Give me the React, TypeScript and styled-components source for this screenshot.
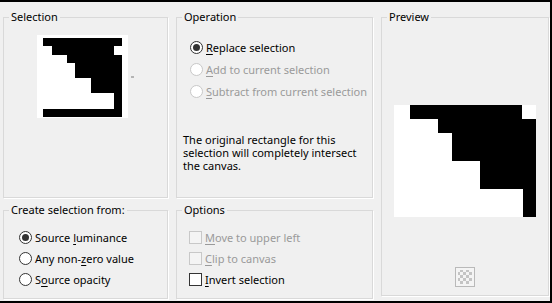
import React from "react";
import styled, { createGlobalStyle } from "styled-components";

const Global = createGlobalStyle`
  html, body { margin: 0; padding: 0; background: #f0f0f0; }
  body {
    font-family: "Noto Sans", "Open Sans", sans-serif;
    font-size: 11px;
    color: #000;
  }
`;

const Dialog = styled.div`
  box-sizing: border-box;
  width: 552px;
  height: 303px;
  background: #f0f0f0;
  border-top: 2px solid #000;
  border-right: 2px solid #000;
  border-bottom: 2px solid #000;
  padding: 8px 0 0 3px;
  display: grid;
  grid-template-columns: 165px 197px 168px;
  grid-template-rows: 188px 96px;
  column-gap: 8px;
  row-gap: 5px;
`;

const Group = styled.fieldset<{ $col: number; $row: string; $h?: number }>`
  box-sizing: border-box;
  margin: 0;
  min-width: 0;
  padding: 0;
  border: 1px solid #d9d9d9;
  box-shadow: 1px 1px 0 #fff;
  height: ${(p) => (p.$h ? `${p.$h}px` : "100%")};
  grid-column: ${(p) => p.$col};
  grid-row: ${(p) => p.$row};
`;

const Legend = styled.legend`
  margin-left: 5px;
  padding: 0 2px;
  line-height: 14px;
  font-size: 11px;
`;

const ThumbRow = styled.div`
  display: flex;
  align-items: center;
  justify-content: center;
  gap: 3px;
  padding-top: 11px;
`;

const DropMark = styled.span`
  width: 3px;
  height: 2px;
  background: #b4b4b4;
`;

const OptionList = styled.div<{ $top: number; $left: number }>`
  display: flex;
  flex-direction: column;
  padding: ${(p) => p.$top}px 0 0 ${(p) => p.$left}px;
`;

const OptionRow = styled.label<{ $disabled?: boolean; $h: number }>`
  display: flex;
  align-items: center;
  gap: 3px;
  height: ${(p) => p.$h}px;
  color: ${(p) => (p.$disabled ? "#9a9a9a" : "#000")};
  white-space: nowrap;
  line-height: 13px;
`;

const RadioMark = styled.span<{ $checked?: boolean; $disabled?: boolean }>`
  box-sizing: border-box;
  flex: none;
  width: 13px;
  height: 13px;
  border-radius: 50%;
  border: 1px solid ${(p) => (p.$disabled ? "#c8c8c8" : "#333")};
  background: #fff;
  display: flex;
  align-items: center;
  justify-content: center;
  &::after {
    content: "";
    width: 7px;
    height: 7px;
    border-radius: 50%;
    background: #333;
    display: ${(p) => (p.$checked ? "block" : "none")};
  }
`;

const CheckMark = styled.span<{ $disabled?: boolean }>`
  box-sizing: border-box;
  flex: none;
  width: 13px;
  height: 13px;
  border: 1px solid ${(p) => (p.$disabled ? "#c8c8c8" : "#333")};
  background: ${(p) => (p.$disabled ? "#f4f4f4" : "#fff")};
`;

const Key = styled.span`
  text-decoration: underline;
  text-underline-offset: 2px;
`;

const Note = styled.p`
  margin: 31px 0 0 6px;
  line-height: 13px;
  white-space: nowrap;
`;

const PreviewBody = styled.div`
  display: flex;
  flex-direction: column;
  align-items: center;
  padding-top: 81px;
`;

const CheckerButton = styled.div`
  box-sizing: border-box;
  width: 20px;
  height: 20px;
  margin-top: 50px;
  border: 1px solid #b9b9b9;
  padding: 2px;
  background: repeating-conic-gradient(#c4c4c4 0 25%, #f4f4f4 0 50%) 2px 2px / 6px 6px content-box,
    #f4f4f4;
`;

const Thumb = () => (
  <svg width="91" height="83" viewBox="0 0 91 83" style={{ display: "block" }}>
    <rect width="91" height="83" fill="#fff" />
    <g fill="#000">
      <rect x="6" y="3" width="79" height="8" />
      <rect x="15" y="11" width="62" height="9" />
      <rect x="30" y="20" width="55" height="8" />
      <rect x="38" y="28" width="47" height="15" />
      <rect x="54" y="43" width="31" height="15" />
      <rect x="77" y="58" width="8" height="16" />
      <rect x="6" y="74" width="79" height="8" />
    </g>
  </svg>
);

const PreviewImage = () => (
  <svg width="142" height="112" viewBox="0 0 142 112" style={{ display: "block" }}>
    <rect width="142" height="112" fill="#fff" />
    <g fill="#000">
      <rect x="16" y="0" width="112" height="14" />
      <rect x="44" y="14" width="98" height="14" />
      <rect x="58" y="28" width="84" height="28" />
      <rect x="86" y="56" width="56" height="28" />
      <rect x="129" y="84" width="13" height="28" />
    </g>
  </svg>
);

export default function App() {
  return (
    <>
      <Global />
      <Dialog>
        <Group $col={1} $row="1">
          <Legend>Selection</Legend>
          <ThumbRow>
            <Thumb />
            <DropMark />
          </ThumbRow>
        </Group>

        <Group $col={2} $row="1">
          <Legend>Operation</Legend>
          <OptionList $top={12} $left={13}>
            <OptionRow $h={22}>
              <RadioMark $checked />
              <span>
                <Key>R</Key>eplace selection
              </span>
            </OptionRow>
            <OptionRow $h={22} $disabled>
              <RadioMark $disabled />
              <span>
                <Key>A</Key>dd to current selection
              </span>
            </OptionRow>
            <OptionRow $h={22} $disabled>
              <RadioMark $disabled />
              <span>
                <Key>S</Key>ubtract from current selection
              </span>
            </OptionRow>
          </OptionList>
          <Note>
            The original rectangle for this
            <br />
            selection will completely intersect
            <br />
            the canvas.
          </Note>
        </Group>

        <Group $col={3} $row="1 / span 2" $h={286}>
          <Legend>Preview</Legend>
          <PreviewBody>
            <PreviewImage />
            <CheckerButton />
          </PreviewBody>
        </Group>

        <Group $col={1} $row="2">
          <Legend>Create selection from:</Legend>
          <OptionList $top={10} $left={15}>
            <OptionRow $h={21}>
              <RadioMark $checked />
              <span>
                Source <Key>l</Key>uminance
              </span>
            </OptionRow>
            <OptionRow $h={21}>
              <RadioMark />
              <span>
                Any non-<Key>z</Key>ero value
              </span>
            </OptionRow>
            <OptionRow $h={21}>
              <RadioMark />
              <span>
                S<Key>o</Key>urce opacity
              </span>
            </OptionRow>
          </OptionList>
        </Group>

        <Group $col={2} $row="2">
          <Legend>Options</Legend>
          <OptionList $top={10} $left={12}>
            <OptionRow $h={21} $disabled>
              <CheckMark $disabled />
              <span>
                <Key>M</Key>ove to upper left
              </span>
            </OptionRow>
            <OptionRow $h={21} $disabled>
              <CheckMark $disabled />
              <span>
                <Key>C</Key>lip to canvas
              </span>
            </OptionRow>
            <OptionRow $h={21}>
              <CheckMark />
              <span>
                <Key>I</Key>nvert selection
              </span>
            </OptionRow>
          </OptionList>
        </Group>
      </Dialog>
    </>
  );
}
